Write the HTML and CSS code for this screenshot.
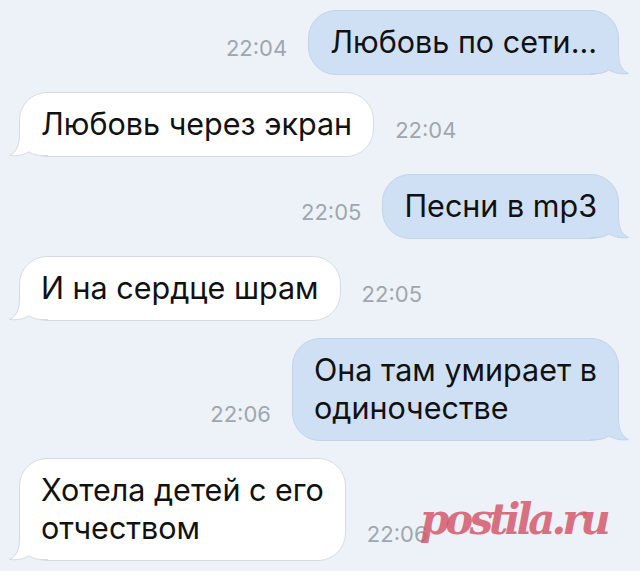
FILE: index.html
```html
<!DOCTYPE html>
<html lang="ru">
<head>
    <meta charset="UTF-8">
    <meta name="viewport" content="width=device-width, initial-scale=1.0">
    <title>Переписка</title>
    <link rel="stylesheet" href="styles.css">
</head>
<body>
    <div class="chat">
        <div class="row out">
            <span class="time">22:04</span>
            <div class="bubble out">
                <svg class="tail" width="40" height="32" viewBox="0 0 40 32"><path class="fill" d="M0 0H28V8C28 20 31 27 39 31C31 32 24 30 19 27C15 30 10 31 4 31H0Z"/><path class="edge" d="M28.5 0V8C28.5 20 31 27 38.5 30.5C31 31.5 24 30 19 26.8C15 29.8 10 30.5 4 30.5H0"/></svg>
                <span class="text">Любовь по сети...</span>
            </div>
        </div>

        <div class="row in">
            <div class="bubble in">
                <svg class="tail" width="40" height="32" viewBox="0 0 40 32"><path class="fill" d="M0 0H28V8C28 20 31 27 39 31C31 32 24 30 19 27C15 30 10 31 4 31H0Z"/><path class="edge" d="M28.5 0V8C28.5 20 31 27 38.5 30.5C31 31.5 24 30 19 26.8C15 29.8 10 30.5 4 30.5H0"/></svg>
                <span class="text">Любовь через экран</span>
            </div>
            <span class="time">22:04</span>
        </div>

        <div class="row out">
            <span class="time">22:05</span>
            <div class="bubble out">
                <svg class="tail" width="40" height="32" viewBox="0 0 40 32"><path class="fill" d="M0 0H28V8C28 20 31 27 39 31C31 32 24 30 19 27C15 30 10 31 4 31H0Z"/><path class="edge" d="M28.5 0V8C28.5 20 31 27 38.5 30.5C31 31.5 24 30 19 26.8C15 29.8 10 30.5 4 30.5H0"/></svg>
                <span class="text">Песни в mp3</span>
            </div>
        </div>

        <div class="row in">
            <div class="bubble in">
                <svg class="tail" width="40" height="32" viewBox="0 0 40 32"><path class="fill" d="M0 0H28V8C28 20 31 27 39 31C31 32 24 30 19 27C15 30 10 31 4 31H0Z"/><path class="edge" d="M28.5 0V8C28.5 20 31 27 38.5 30.5C31 31.5 24 30 19 26.8C15 29.8 10 30.5 4 30.5H0"/></svg>
                <span class="text">И на сердце шрам</span>
            </div>
            <span class="time">22:05</span>
        </div>

        <div class="row out">
            <span class="time">22:06</span>
            <div class="bubble out">
                <svg class="tail" width="40" height="32" viewBox="0 0 40 32"><path class="fill" d="M0 0H28V8C28 20 31 27 39 31C31 32 24 30 19 27C15 30 10 31 4 31H0Z"/><path class="edge" d="M28.5 0V8C28.5 20 31 27 38.5 30.5C31 31.5 24 30 19 26.8C15 29.8 10 30.5 4 30.5H0"/></svg>
                <span class="text">Она там умирает в<br>одиночестве</span>
            </div>
        </div>

        <div class="row in">
            <div class="bubble in">
                <svg class="tail" width="40" height="32" viewBox="0 0 40 32"><path class="fill" d="M0 0H28V8C28 20 31 27 39 31C31 32 24 30 19 27C15 30 10 31 4 31H0Z"/><path class="edge" d="M28.5 0V8C28.5 20 31 27 38.5 30.5C31 31.5 24 30 19 26.8C15 29.8 10 30.5 4 30.5H0"/></svg>
                <span class="text">Хотела детей с его<br>отчеством</span>
            </div>
            <span class="time">22:06</span>
        </div>
    </div>

    <!-- водяной знак -->
    <div class="watermark">postila.ru</div>
</body>
</html>
```

FILE: styles.css
```css
body {
    margin: 0;
    padding: 0;
    background-color: #edf2f8;
    font-family: Inter, "Noto Sans", sans-serif;
    color: #111;
    width: 640px;
    height: 571px;
    overflow: hidden;
    position: relative;
}
.chat {
    display: flex;
    flex-direction: column;
    gap: 17px;
    padding: 10px 21px 0 19px;
}
.row {
    display: flex;
    align-items: flex-end;
    gap: 21px;
}
.row.out {
    justify-content: flex-end;
}
.time {
    font-size: 22px;
    line-height: 26px;
    color: #a0a6ae;
    margin-bottom: 14px;
}
.bubble {
    position: relative;
    font-size: 30.5px;
    line-height: 38px;
    padding: 12px 21px 13px;
    border-radius: 28px;
    border: 1px solid #d7dbe1;
    background: #ffffff;
    white-space: nowrap;
}
.bubble .text {
    position: relative;
}
.bubble.out {
    background: #cfe0f5;
    border-color: #c2d4ea;
}
.tail {
    position: absolute;
    bottom: -1px;
    right: -12px;
}
.bubble.in .tail {
    right: auto;
    left: -12px;
    transform: scaleX(-1);
}
.tail .fill {
    fill: #ffffff;
}
.tail .edge {
    fill: none;
    stroke: #d7dbe1;
    stroke-width: 1;
}
.bubble.out .tail .fill {
    fill: #cfe0f5;
}
.bubble.out .tail .edge {
    stroke: #c2d4ea;
}
.watermark {
    position: absolute;
    left: 420px;
    top: 495px;
    font-family: "DejaVu Serif", serif;
    font-weight: bold;
    font-style: italic;
    font-size: 42px;
    letter-spacing: -4px;
    color: rgba(214, 88, 108, 0.85);
}
```
